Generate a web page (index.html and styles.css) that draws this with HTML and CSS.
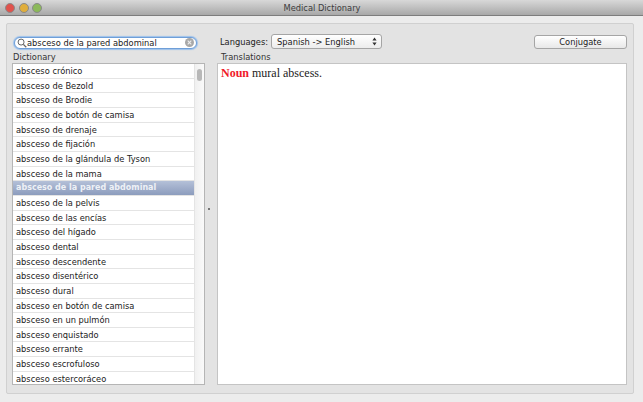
FILE: index.html
```html
<!DOCTYPE html>
<html lang="en">
<head>
  <meta charset="UTF-8" />
  <title>Medical Dictionary</title>
  <link rel="stylesheet" href="styles.css">
</head>
<body>
  <div class="window">
    <div class="titlebar">
      <div class="lights">
        <span class="light red"></span>
        <span class="light yellow"></span>
        <span class="light green"></span>
      </div>
      <div class="title">Medical Dictionary</div>
    </div>
    <div class="panel">
      <div class="toolbar">
        <div class="search">
          <svg class="glass" width="10" height="10" viewBox="0 0 11 11">
            <circle cx="4.5" cy="4.5" r="3.3" fill="none" stroke="#666" stroke-width="1.1"/>
            <path d="M7 7l3.2 3.2" stroke="#666" stroke-width="1.5"/>
          </svg>
          <span class="search-text">absceso de la pared abdominal</span>
          <svg class="clear" width="9" height="9" viewBox="0 0 10 10">
            <circle cx="5" cy="5" r="5" fill="#a8a8a8"/>
            <path d="M3 3l4 4M7 3l-4 4" stroke="#eee" stroke-width="1.2"/>
          </svg>
        </div>
        <div class="languages">
          <span>Languages:</span>
          <div class="select">
            <span>Spanish -&gt; English</span>
            <svg width="5" height="9" viewBox="0 0 5 9">
              <path d="M2.5 0.5L4.6 3.5H0.4zM2.5 8.5L4.6 5.5H0.4z" fill="#333"/>
            </svg>
          </div>
        </div>
        <button class="conjugate">Conjugate</button>
      </div>
      <div class="columns">
        <div class="left">
          <div class="label">Dictionary</div>
          <div class="list">
            <div class="rows">
              <div class="row">absceso crónico</div>
              <div class="row">absceso de Bezold</div>
              <div class="row">absceso de Brodie</div>
              <div class="row">absceso de botón de camisa</div>
              <div class="row">absceso de drenaje</div>
              <div class="row">absceso de fijación</div>
              <div class="row">absceso de la glándula de Tyson</div>
              <div class="row">absceso de la mama</div>
              <div class="row selected">absceso de la pared abdominal</div>
              <div class="row">absceso de la pelvis</div>
              <div class="row">absceso de las encías</div>
              <div class="row">absceso del hígado</div>
              <div class="row">absceso dental</div>
              <div class="row">absceso descendente</div>
              <div class="row">absceso disentérico</div>
              <div class="row">absceso dural</div>
              <div class="row">absceso en botón de camisa</div>
              <div class="row">absceso en un pulmón</div>
              <div class="row">absceso enquistado</div>
              <div class="row">absceso errante</div>
              <div class="row">absceso escrofuloso</div>
              <div class="row">absceso estercoráceo</div>
            </div>
            <div class="scrollbar"><div class="thumb"></div></div>
          </div>
        </div>
        <div class="splitter"><span class="grip"></span></div>
        <div class="right">
          <div class="label">Translations</div>
          <div class="translation"><b>Noun</b> mural abscess.</div>
        </div>
      </div>
    </div>
  </div>
</body>
</html>
```

FILE: styles.css
```css
* {
  box-sizing: border-box;
}
html, body {
  margin: 0;
  padding: 0;
  height: 100%;
  overflow: hidden;
}
body {
  font-family: "DejaVu Sans", sans-serif;
  font-size: 8.3px;
  color: #222;
  background: #ececec;
}
.window {
  height: 402px;
  display: flex;
  flex-direction: column;
}
.titlebar {
  flex: none;
  height: 16px;
  display: flex;
  align-items: center;
  position: relative;
  background: linear-gradient(#d8d8d8, #a8a8a8);
  border-bottom: 1px solid #7d7d7d;
}
.lights {
  display: flex;
  gap: 3.5px;
  padding-left: 5px;
}
.light {
  width: 10px;
  height: 10px;
  border-radius: 50%;
  border: 1px solid #8a8a8a;
}
.red { background: #e0524c; }
.yellow { background: #e0ae3c; }
.green { background: #8cb95a; }
.title {
  position: absolute;
  left: 0;
  right: 0;
  padding-left: 1px;
  text-align: center;
  color: #3c3c3c;
}
.panel {
  flex: 1;
  min-height: 0;
  margin: 7px 9px 8px 6px;
  display: flex;
  flex-direction: column;
  background: #e3e3e3;
  border: 1px solid #d0d0d0;
  border-radius: 2px;
  padding: 10px 6px 8px 5px;
}
.toolbar {
  flex: none;
  display: flex;
  align-items: center;
  height: 15px;
}
.search {
  width: 183px;
  height: 12px;
  margin: 2px 0 0 2px;
  padding: 0 2px 0 2px;
  display: flex;
  align-items: center;
  gap: 0;
  background: #fff;
  border: 1px solid #6f9fd8;
  border-radius: 6px;
  box-shadow: 0 0 1px 1px #9cc0ea;
}
.search-text {
  flex: 1;
  white-space: nowrap;
}
.glass, .clear {
  flex: none;
}
.languages {
  margin-left: 23px;
  display: flex;
  align-items: center;
  gap: 3px;
}
.select {
  width: 111px;
  height: 15px;
  padding: 0 4px 0 5px;
  display: flex;
  align-items: center;
  justify-content: space-between;
  background: linear-gradient(#fff, #ececec);
  border: 1px solid #a5a5a5;
  border-radius: 3px;
}
.conjugate {
  margin-left: auto;
  width: 93px;
  height: 14px;
  padding: 0;
  font: inherit;
  color: #222;
  background: linear-gradient(#fff, #e8e8e8);
  border: 1px solid #a5a5a5;
  border-radius: 3px;
}
.columns {
  flex: 1;
  min-height: 0;
  margin-top: 3px;
  display: flex;
}
.left {
  width: 193px;
  min-height: 0;
  display: flex;
  flex-direction: column;
}
.right {
  flex: 1;
  min-height: 0;
  display: flex;
  flex-direction: column;
}
.label {
  flex: none;
  height: 11px;
  line-height: 11px;
  padding-left: 1px;
  color: #333;
}
.right .label {
  padding-left: 4px;
}
.list {
  flex: 1;
  min-height: 0;
  display: flex;
  background: #fff;
  border: 1px solid #b5b5b5;
}
.rows {
  flex: 1;
  display: grid;
  grid-auto-rows: 14.667px;
  overflow: hidden;
}
.row {
  padding-left: 3px;
  line-height: 14px;
  border-bottom: 1px solid #e4e4e4;
  white-space: nowrap;
}
.selected {
  color: #eef1f6;
  font-size: 8px;
  font-weight: bold;
  background: linear-gradient(#b4c0d8, #8c9cbd);
}
.scrollbar {
  flex: none;
  width: 10px;
  background: linear-gradient(90deg, #f0f0f0, #fafafa);
  border-left: 1px solid #e4e4e4;
}
.thumb {
  width: 5px;
  height: 12px;
  margin: 5px 0 0 2px;
  border-radius: 3px;
  background: #b8b8b8;
}
.splitter {
  flex: none;
  width: 12px;
  padding: 0 0 20px 3px;
  display: flex;
  align-items: center;
}
.grip {
  width: 2px;
  height: 2px;
  background: #777;
}
.translation {
  flex: 1;
  min-height: 0;
  background: #fff;
  border: 1px solid #c4c4c4;
  padding: 2px 3px;
  font-family: "Liberation Serif", serif;
  font-size: 12px;
  line-height: 15px;
  color: #222;
}
.translation b {
  color: #f01a2a;
}
```
